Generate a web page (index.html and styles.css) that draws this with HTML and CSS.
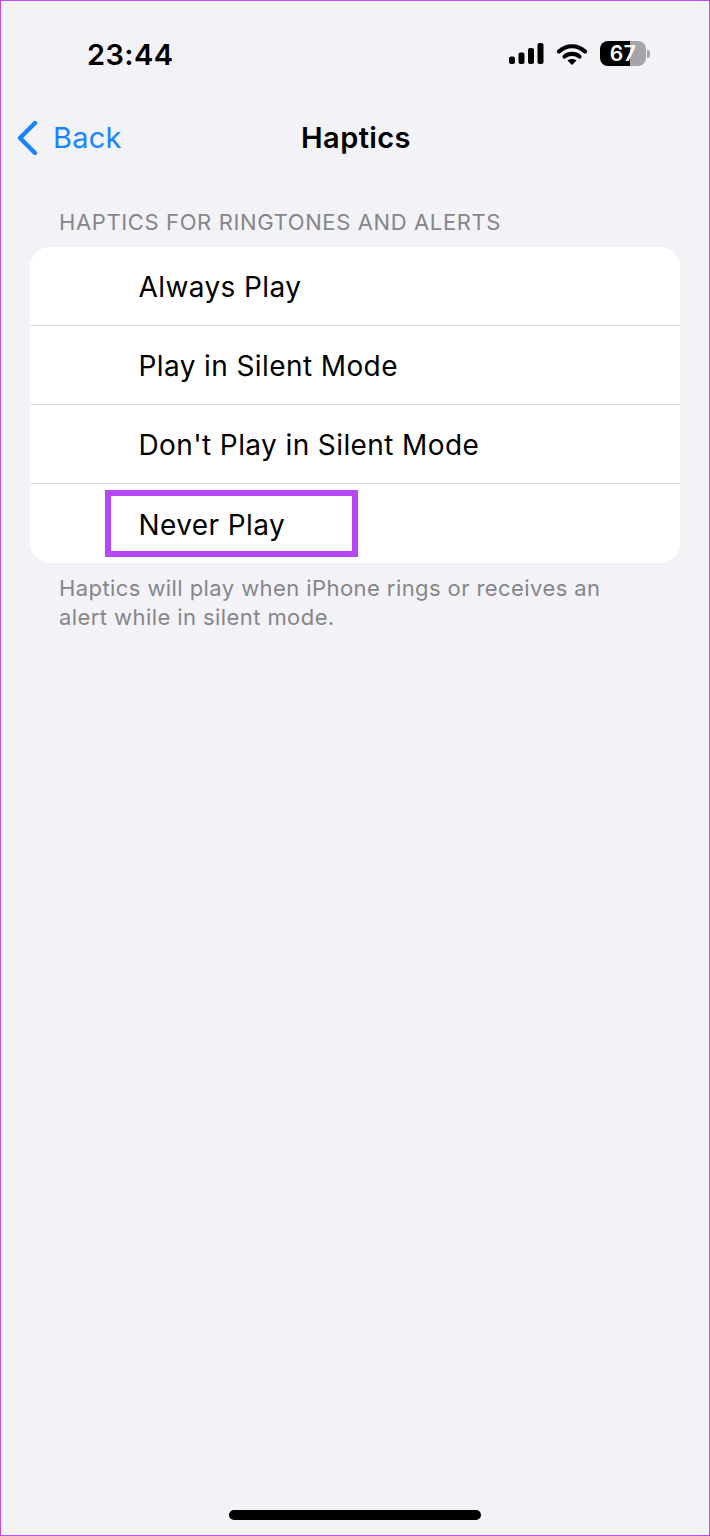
FILE: index.html
```html
<!DOCTYPE html>
<html lang="en">
<head>
<meta charset="utf-8">
<title>Haptics</title>
<link rel="stylesheet" href="styles.css">
</head>
<body>
<div class="screen">
  <header class="status">
    <span class="time">23:44</span>
    <div class="status-icons">
      <svg class="signal" width="35" height="21" viewBox="0 0 35 21"><rect x="0" y="13.500" width="6" height="7.500" rx="2"/><rect x="9.500" y="9.500" width="6" height="11.500" rx="2"/><rect x="19" y="5" width="6" height="16" rx="2"/><rect x="28.500" y="0" width="6" height="21" rx="2"/></svg>
      <svg class="wifi" width="30" height="22" viewBox="0 0 30 22"><path d="M2 8.500C9.500 1.500 20.500 1.500 28 8.500" fill="none" stroke="#000" stroke-width="4.200" stroke-linecap="round"/><path d="M7.500 13.500C11.500 10 18.500 10 22.500 13.500" fill="none" stroke="#000" stroke-width="4.200" stroke-linecap="round"/><path d="M15 22L10.500 17.500C13 15.500 17 15.500 19.500 17.500Z"/></svg>
      <div class="battery">
        <div class="battery-body"><span class="battery-level">67</span></div>
        <span class="battery-cap"></span>
      </div>
    </div>
  </header>
  <nav class="navbar">
    <a class="back">
      <svg class="chevron" width="22" height="36" viewBox="0 0 22 36"><path d="M19 3L4 18L19 33" fill="none" stroke="#1a84ff" stroke-width="4.400" stroke-linecap="round" stroke-linejoin="round"/></svg>
      <span>Back</span>
    </a>
    <h1 class="title">Haptics</h1>
  </nav>
  <main class="content">
    <h2 class="section-label">HAPTICS FOR RINGTONES AND ALERTS</h2>
    <ul class="list">
      <li class="row">Always Play</li>
      <li class="row">Play in Silent Mode</li>
      <li class="row">Don't Play in Silent Mode</li>
      <li class="row">Never Play<span class="highlight"></span></li>
    </ul>
    <p class="footnote">Haptics will play when iPhone rings or receives an alert while in silent mode.</p>
  </main>
  <div class="home-indicator"></div>
</div>
</body>
</html>
```
FILE: styles.css
```css
* { box-sizing: border-box; }
html, body { margin: 0; padding: 0; }
body { font-family: Inter, "Liberation Sans", sans-serif; background: #f2f2f7; color: #000; }
.screen {
  width: 710px; height: 1536px;
  border: 1px solid #b84dfb;
  background: #f2f2f7;
  display: flex; flex-direction: column;
}
.status {
  height: 85px; flex: none;
  display: flex; justify-content: space-between; align-items: center;
  padding: 20px 59px 0 86px;
}
.time { font-size: 29px; font-weight: 600; letter-spacing: 0.4px; margin-top: 1px; }
.status-icons { display: flex; align-items: center; gap: 13px; }
.signal, .wifi { display: block; }
.battery { display: flex; align-items: center; gap: 1px; }
.battery-body {
  width: 46px; height: 25px; border-radius: 8px;
  background: linear-gradient(to right, #000 0 66%, #a5a5a9 66% 100%);
  display: flex; align-items: center; justify-content: center;
}
.battery-level { color: #fff; font-size: 21px; font-weight: 600; line-height: 25px; letter-spacing: 0.5px; }
.battery-cap { width: 3px; height: 8px; border-radius: 0 3px 3px 0; background: #a5a5a9; }
.navbar {
  height: 103px; flex: none; position: relative;
  display: flex; align-items: center; justify-content: center;
}
.back {
  position: absolute; left: 15px; top: 0; height: 103px;
  display: flex; align-items: center; gap: 15px;
  color: #1a84ff; font-size: 29px; letter-spacing: 0.2px;
}
.title { margin: 0 0 0 2px; font-size: 29px; font-weight: 600; letter-spacing: 0.4px; }
.content { padding: 0 29px; flex: 1; margin-top: 17px; }
.section-label {
  margin: 0 0 9px; padding-left: 29px;
  font-size: 22px; font-weight: 400; line-height: 32px; color: #86868b; letter-spacing: 0.62px;
}
.list { list-style: none; margin: 0; padding: 0; background: #fff; border-radius: 20px; }
.row {
  height: 79px; display: flex; align-items: center;
  padding: 2px 0 0 108.500px; font-size: 28px; letter-spacing: 0.4px; position: relative;
  border-bottom: 1px solid #dcdce0;
}
.row:last-child { border-bottom: none; }
.highlight {
  position: absolute; left: 75px; top: 6px; width: 253px; height: 67px;
  border: 6px solid #b746fb;
}
.footnote {
  margin: 11px 0 0; padding: 0 60px 0 29px;
  font-size: 22px; line-height: 29px; color: #86868b; letter-spacing: 0.42px;
}
.home-indicator {
  flex: none; width: 252px; height: 10px; border-radius: 5px; background: #000;
  align-self: center; margin-bottom: 15px;
}
```
